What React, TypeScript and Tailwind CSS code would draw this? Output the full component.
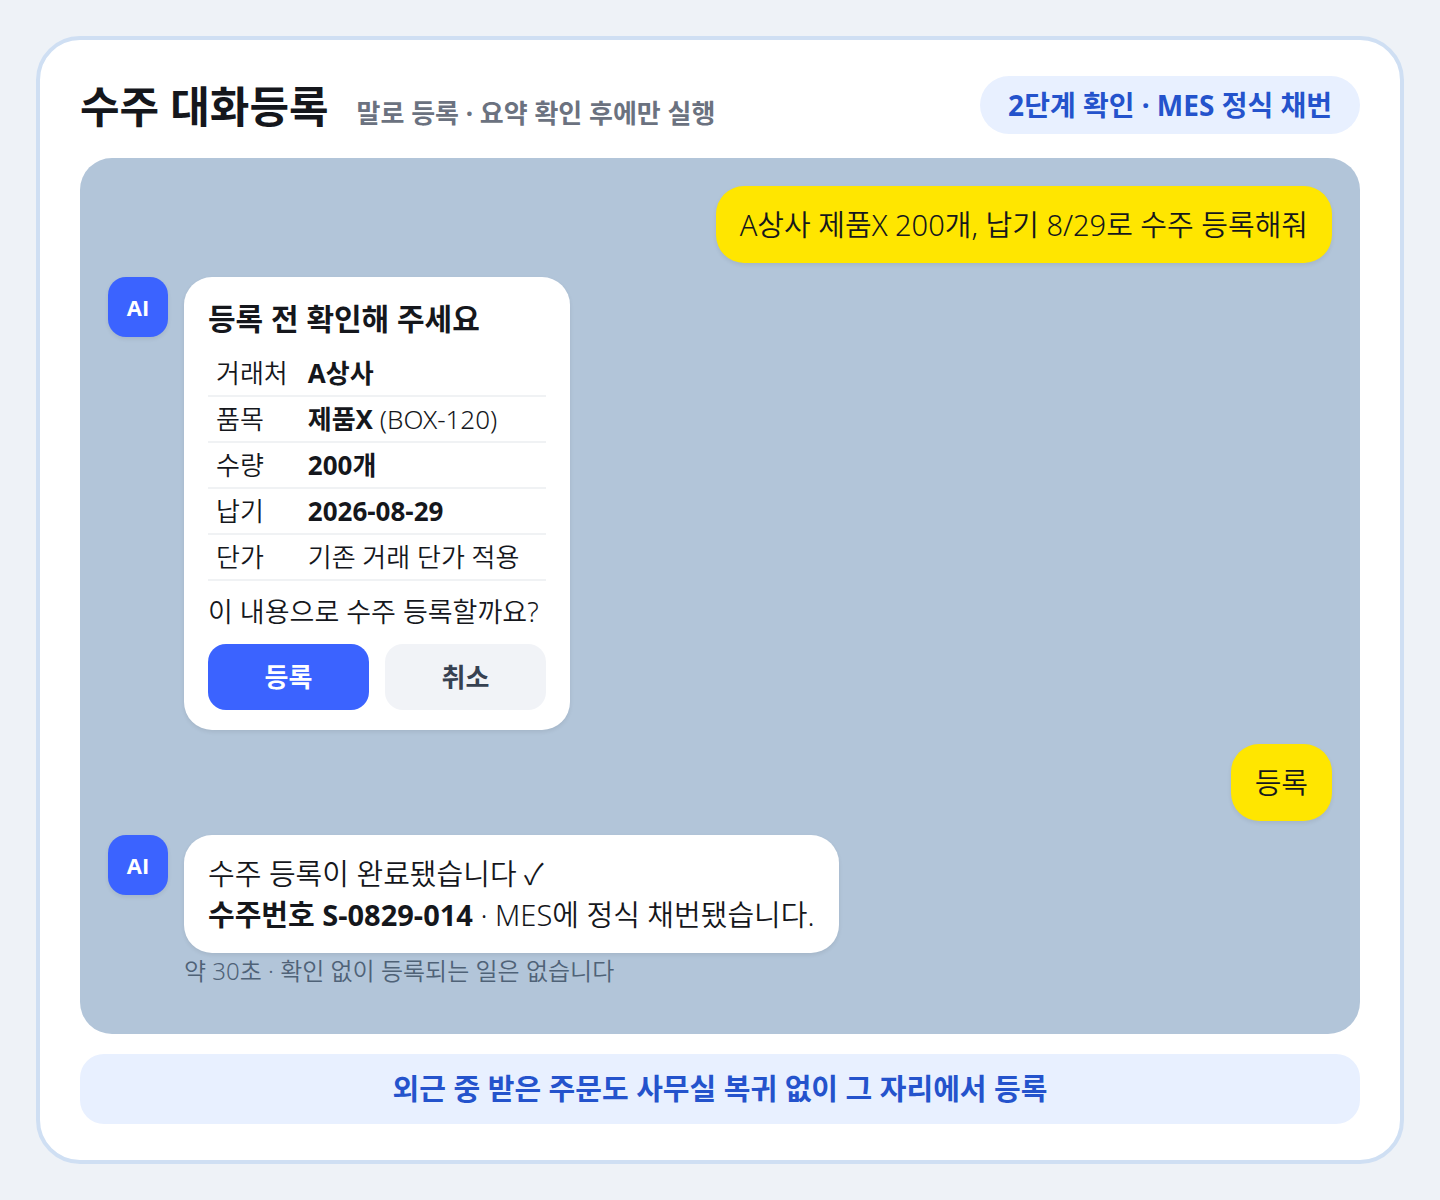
import type { ReactNode } from 'react';

const rows: { label: string; strong?: string; rest?: string }[] = [
  { label: '거래처', strong: 'A상사' },
  { label: '품목', strong: '제품X', rest: '(BOX-120)' },
  { label: '수량', strong: '200개' },
  { label: '납기', strong: '2026-08-29' },
  { label: '단가', rest: '기존 거래 단가 적용' },
];

function Avatar() {
  return (
    <div className="flex size-15 shrink-0 items-center justify-center rounded-[18px] bg-[#3b63ff] font-['Open_Sans',sans-serif] text-[22px] font-bold text-white shadow-[0_2px_4px_rgba(0,0,0,0.08)]">
      AI
    </div>
  );
}

function UserMessage({ children }: { children: ReactNode }) {
  return (
    <div className="self-end rounded-[28px] bg-[#ffe600] px-6 py-[18px] text-[29px] leading-[41px] shadow-[0_2px_4px_rgba(0,0,0,0.08)]">
      {children}
    </div>
  );
}

function BotMessage({ children, note }: { children: ReactNode; note?: string }) {
  return (
    <div className="flex items-start gap-4">
      <Avatar />
      <div className="flex flex-col items-start">
        <div className="rounded-[28px] bg-white px-6 py-[18px] shadow-[0_2px_4px_rgba(0,0,0,0.08)]">{children}</div>
        {note && <p className="text-2xl leading-9 text-[#4f6277]">{note}</p>}
      </div>
    </div>
  );
}

export default function App() {
  return (
    <div className="min-h-screen bg-[#eef2f7] p-9 font-['Noto_Sans','Noto_Sans_CJK_KR',sans-serif] font-[350] text-[#15171c]">
      <main className="flex min-h-[1128px] flex-col rounded-[44px] border-4 border-[#cfdff3] bg-white px-10 py-9">
        <header className="flex items-center justify-between">
          <div className="flex items-baseline gap-7 pt-1">
            <h1 className="text-[43px] leading-[54px] font-bold">수주 대화등록</h1>
            <p className="text-[26px] leading-9 font-bold text-[#6b7280]">말로 등록 · 요약 확인 후에만 실행</p>
          </div>
          <span className="rounded-full bg-[#e8f0ff] px-7 py-[11px] text-[28px] leading-9 font-bold text-[#2453cc]">
            2단계 확인 · MES 정식 채번
          </span>
        </header>
        <section className="mt-6 flex flex-1 flex-col gap-3.5 rounded-[32px] bg-[#b2c5d9] p-7">
          <UserMessage>A상사 제품X 200개, 납기 8/29로 수주 등록해줘</UserMessage>
          <BotMessage>
            <h2 className="text-[30px] leading-[47px] font-bold">등록 전 확인해 주세요</h2>
            <table className="mt-2 w-full min-w-[338px] text-[26px] leading-9">
              <tbody>
                {rows.map((row) => (
                  <tr key={row.label} className="h-[46px] border-b-2 border-[#f0f2f4]">
                    <th scope="row" className="px-2 text-left font-[350] whitespace-nowrap">{row.label}</th>
                    <td className="w-full px-3 whitespace-nowrap">
                      {row.strong && <b className="font-bold">{row.strong}</b>} {row.rest}
                    </td>
                  </tr>
                ))}
              </tbody>
            </table>
            <p className="mt-[11px] text-[27px] leading-10">이 내용으로 수주 등록할까요?</p>
            <div className="mt-3 mb-0.5 grid grid-cols-2 gap-4 text-[26px] font-bold">
              <button className="h-[66px] rounded-[18px] bg-[#3b63ff] text-white">등록</button>
              <button className="h-[66px] rounded-[18px] bg-[#f1f3f7] text-[#374151]">취소</button>
            </div>
          </BotMessage>
          <UserMessage>등록</UserMessage>
          <BotMessage note="약 30초 · 확인 없이 등록되는 일은 없습니다">
            <p className="text-[29px] leading-[41px]">
              수주 등록이 완료됐습니다 ✓<br />
              <b className="font-bold">수주번호 S-0829-014</b> · MES에 정식 채번됐습니다.
            </p>
          </BotMessage>
        </section>
        <footer className="mt-5 rounded-3xl bg-[#e8f0ff] py-[15px] text-center text-[29px] leading-10 font-bold text-[#2453cc]">
          외근 중 받은 주문도 사무실 복귀 없이 그 자리에서 등록
        </footer>
      </main>
    </div>
  );
}
